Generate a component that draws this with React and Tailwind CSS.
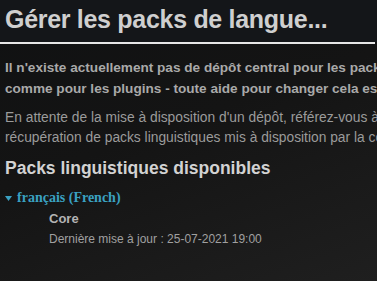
export default function App() {
  return (
    <div className="w-[377px] h-[281px] overflow-hidden bg-[linear-gradient(160deg,#101112_0%,#141414_45%,#1f1f1f_100%)] font-['Liberation_Sans',Arial,sans-serif]">
      <div className="bg-[#141619] h-[42px] pl-[5px] pt-[3px]">
        <h1 className="text-[25px] leading-[32px] font-bold tracking-[-0.3px] text-[#cfcfcf] whitespace-nowrap">Gérer les packs de langue...</h1>
      </div>
      <div className="h-[2px] bg-[#e6e6e6] w-[375px]"></div>
      <div className="pl-[5px] pt-[13px] whitespace-nowrap">
        <p className="text-[13.6px] leading-[21px] font-bold text-[#a9a9a9]">
          Il n'existe actuellement pas de dépôt central pour les packs de langue<br />
          comme pour les plugins - toute aide pour changer cela est la bienvenue.
        </p>
        <p className="mt-[9px] text-[13.8px] leading-[20px] text-[#9b9b9b]">
          En attente de la mise à disposition d'un dépôt, référez-vous à la page de<br />
          récupération de packs linguistiques mis à disposition par la communauté.
        </p>
        <h2 className="mt-[8px] text-[17.5px] leading-[24px] font-bold text-[#d2d2d2]">Packs linguistiques disponibles</h2>
        <div className="mt-[9px] flex items-center gap-[5px] font-['Liberation_Serif','Times_New_Roman',serif] text-[14px] leading-[18px] font-bold text-[#3aa1c2]">
          <svg width="7" height="5" viewBox="0 0 7 5" className="mt-[1px]"><path d="M0 0H7L3.5 5Z" fill="#3aa1c2" /></svg>
          <span>français (French)</span>
        </div>
        <div className="pl-[44px] mt-[2px]">
          <div className="text-[13px] leading-[20px] font-bold text-[#b3b3b3]">Core</div>
          <div className="text-[12px] leading-[20px] text-[#a0a0a0]">Dernière mise à jour : 25-07-2021 19:00</div>
        </div>
      </div>
    </div>
  );
}
